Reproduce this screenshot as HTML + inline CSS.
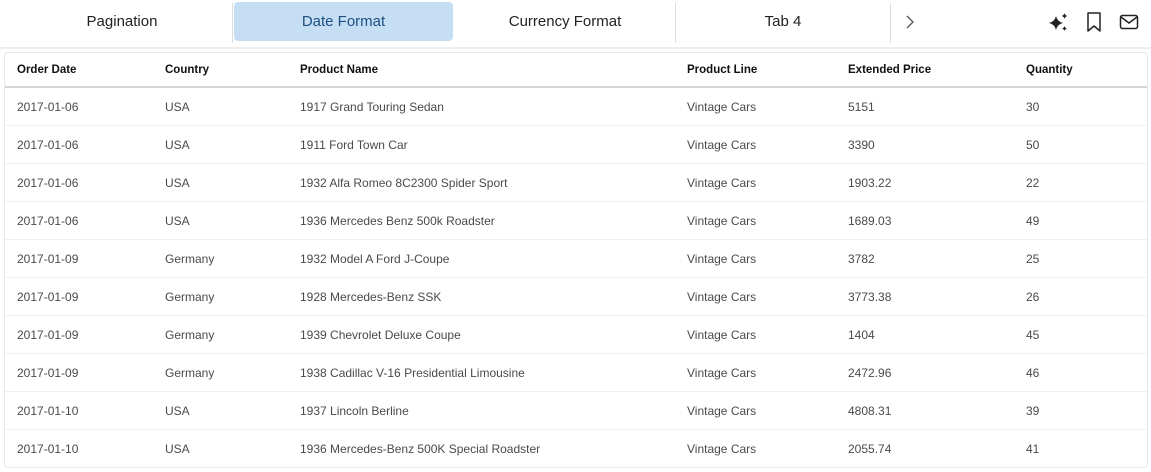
<!DOCTYPE html>
<html><head><meta charset="utf-8"><style>
*{box-sizing:border-box;margin:0;padding:0}
body{width:1151px;height:472px;background:#fff;font-family:"Liberation Sans","DejaVu Sans",sans-serif;position:relative;overflow:hidden;color:#333}
.tab{position:absolute;top:2px;height:39px;line-height:39px;text-align:center;font-size:15px;color:#222}
.act{background:#c6def4;border-radius:4px;color:#1d4f80}
.div{position:absolute;top:3px;width:1px;height:40px;background:#ddd}
.sep{position:absolute;left:0;top:47px;width:1151px;height:2px;background:#eee}
.tbl{position:absolute;left:4px;top:52px;width:1144px;height:416px;border:1px solid #eaeaea;border-radius:4px}
.row{position:absolute;left:0;width:1142px;height:38px;border-bottom:1px solid #f0f0f0;font-size:12px;color:#4a4a4a}
.row span{position:absolute;top:0;line-height:38px;white-space:nowrap}
.hd{top:0;height:35px;border-bottom:2px solid #d6d6d6;font-weight:bold;color:#111;font-size:11.5px}
.hd span{line-height:35px}
.c1{left:12px}.c2{left:160px}.c3{left:295px}.c4{left:682px}.c5{left:843px}.c6{left:1021px}
</style></head><body>
<div class="tab" style="left:10px;width:224px">Pagination</div>
<div class="div" style="left:232px"></div>
<div class="tab act" style="left:234px;width:219px">Date Format</div>
<div class="tab" style="left:455px;width:220px">Currency Format</div>
<div class="div" style="left:675px"></div>
<div class="tab" style="left:676px;width:214px">Tab 4</div>
<div class="div" style="left:890px"></div>
<svg style="position:absolute;left:904px;top:14px" width="12" height="16" viewBox="0 0 12 16"><path d="M3 2l6 6-6 6" fill="none" stroke="#555" stroke-width="1.3"/></svg>
<svg style="position:absolute;left:1048px;top:11px" width="22" height="22" viewBox="0 0 22 22"><path d="M8 5 Q9.3 10.7 15 12 Q9.3 13.3 8 19 Q6.7 13.3 1 12 Q6.7 10.7 8 5Z" fill="#222"/><path d="M16.5 2 Q17 4.5 19.5 5 Q17 5.5 16.5 8 Q16 5.5 13.5 5 Q16 4.5 16.5 2Z" fill="#222"/><path d="M16.5 15 Q17 17 19 17.5 Q17 18 16.5 20 Q16 18 14 17.5 Q16 17 16.5 15Z" fill="#222"/></svg>
<svg style="position:absolute;left:1086px;top:11px" width="16" height="22" viewBox="0 0 16 22"><path d="M2 2h12v18l-6-5-6 5z" fill="none" stroke="#222" stroke-width="1.5" stroke-linejoin="round"/></svg>
<svg style="position:absolute;left:1119px;top:14px" width="20" height="16" viewBox="0 0 20 16"><rect x="1.5" y="1.5" width="17" height="13" rx="2" fill="none" stroke="#222" stroke-width="1.5"/><path d="M2 3l8 6 8-6" fill="none" stroke="#222" stroke-width="1.5"/></svg>
<div class="sep"></div>
<div class="tbl">
<div class="row hd"><span class="c1">Order Date</span><span class="c2">Country</span><span class="c3">Product Name</span><span class="c4">Product Line</span><span class="c5">Extended Price</span><span class="c6">Quantity</span></div>
<div class="row" style="top:35px"><span class="c1">2017-01-06</span><span class="c2">USA</span><span class="c3">1917 Grand Touring Sedan</span><span class="c4">Vintage Cars</span><span class="c5">5151</span><span class="c6">30</span></div>
<div class="row" style="top:73px"><span class="c1">2017-01-06</span><span class="c2">USA</span><span class="c3">1911 Ford Town Car</span><span class="c4">Vintage Cars</span><span class="c5">3390</span><span class="c6">50</span></div>
<div class="row" style="top:111px"><span class="c1">2017-01-06</span><span class="c2">USA</span><span class="c3">1932 Alfa Romeo 8C2300 Spider Sport</span><span class="c4">Vintage Cars</span><span class="c5">1903.22</span><span class="c6">22</span></div>
<div class="row" style="top:149px"><span class="c1">2017-01-06</span><span class="c2">USA</span><span class="c3">1936 Mercedes Benz 500k Roadster</span><span class="c4">Vintage Cars</span><span class="c5">1689.03</span><span class="c6">49</span></div>
<div class="row" style="top:187px"><span class="c1">2017-01-09</span><span class="c2">Germany</span><span class="c3">1932 Model A Ford J-Coupe</span><span class="c4">Vintage Cars</span><span class="c5">3782</span><span class="c6">25</span></div>
<div class="row" style="top:225px"><span class="c1">2017-01-09</span><span class="c2">Germany</span><span class="c3">1928 Mercedes-Benz SSK</span><span class="c4">Vintage Cars</span><span class="c5">3773.38</span><span class="c6">26</span></div>
<div class="row" style="top:263px"><span class="c1">2017-01-09</span><span class="c2">Germany</span><span class="c3">1939 Chevrolet Deluxe Coupe</span><span class="c4">Vintage Cars</span><span class="c5">1404</span><span class="c6">45</span></div>
<div class="row" style="top:301px"><span class="c1">2017-01-09</span><span class="c2">Germany</span><span class="c3">1938 Cadillac V-16 Presidential Limousine</span><span class="c4">Vintage Cars</span><span class="c5">2472.96</span><span class="c6">46</span></div>
<div class="row" style="top:339px"><span class="c1">2017-01-10</span><span class="c2">USA</span><span class="c3">1937 Lincoln Berline</span><span class="c4">Vintage Cars</span><span class="c5">4808.31</span><span class="c6">39</span></div>
<div class="row" style="top:377px;border-bottom:none"><span class="c1">2017-01-10</span><span class="c2">USA</span><span class="c3">1936 Mercedes-Benz 500K Special Roadster</span><span class="c4">Vintage Cars</span><span class="c5">2055.74</span><span class="c6">41</span></div>
</div>
</body></html>
